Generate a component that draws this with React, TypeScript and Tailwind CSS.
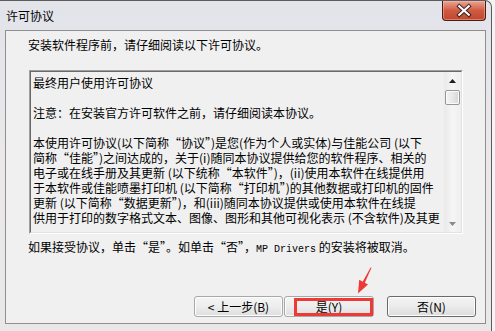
import React from 'react';

const agreementLines = [
  '最终用户使用许可协议',
  '',
  '注意：在安装官方许可软件之前，请仔细阅读本协议。',
  '',
  '本使用许可协议(以下简称“协议”)是您(作为个人或实体)与佳能公司 (以下',
  '简称“佳能”)之间达成的，关于(i)随同本协议提供给您的软件程序、相关的',
  '电子或在线手册及其更新 (以下统称“本软件”)，(ii)使用本软件在线提供用',
  '于本软件或佳能喷墨打印机 (以下简称“打印机”)的其他数据或打印机的固件',
  '更新 (以下简称“数据更新”)，和(iii)随同本协议提供或使用本软件在线提',
  '供用于打印的数字格式文本、图像、图形和其他可视化表示 (不含软件)及其更',
];

const CloseButton: React.FC = () => (
  <div className="w-[44px] h-[20px] rounded-b-[4px] border border-t-0 border-[#4a1c16] bg-gradient-to-b from-[#e9a594] via-[#cf5a42] to-[#c3452c] flex items-center justify-center shadow-[inset_0_0_0_1px_rgba(255,200,190,0.45)]">
    <svg width="44" height="20" viewBox="0 0 44 20">
      <path d="M17 5 L27 14 M27 5 L17 14" stroke="#3b2322" strokeWidth="4.2" strokeLinecap="square" />
      <path d="M17 5 L27 14 M27 5 L17 14" stroke="#ffffff" strokeWidth="2.2" strokeLinecap="square" />
    </svg>
  </div>
);

const ScrollBar: React.FC = () => (
  <div className="w-[17px] h-full flex flex-col bg-gradient-to-r from-[#e9e9e9] via-[#f5f5f5] to-[#efefef]">
    <div className="h-[17px] flex items-center justify-center">
      <svg width="7" height="4" viewBox="0 0 7 4">
        <polygon points="3.5,0 7,4 0,4" fill="#1e1e1e" />
      </svg>
    </div>
    <div className="mx-[1px] mt-[1px] h-[15px] rounded-[2px] border border-[#979797] bg-gradient-to-r from-[#f4f4f4] via-[#e8e8e8] to-[#d6d6d6] shadow-[inset_0_0_0_1px_#fbfbfb]" />
    <div className="flex-1" />
    <div className="h-[17px] flex items-center justify-center">
      <svg width="7" height="4" viewBox="0 0 7 4">
        <polygon points="0,0 7,0 3.5,4" fill="#8a8a8a" />
      </svg>
    </div>
  </div>
);

const WinButton: React.FC<{ label: string; width: string; isDefault?: boolean }> = ({ label, width, isDefault }) => (
  <div
    className={
      isDefault
        ? `${width} h-[21px] flex items-center justify-center rounded-[3px] border border-[#6a6a6a] bg-gradient-to-b from-[#f3f3f3] via-[#ebebeb] to-[#dcdcdc] shadow-[inset_0_0_0_1px_#fdfdfd] text-[12px] text-black`
        : `${width} h-[21px] flex items-center justify-center rounded-[3px] border border-[#a8a8a8] bg-gradient-to-b from-[#f4f4f4] via-[#ededed] to-[#dedede] shadow-[inset_0_0_0_1px_#fdfdfd] text-[12px] text-black`
    }
  >
    {label}
  </div>
);

export default function App() {
  return (
    <div
      className="relative w-[495px] h-[331px] overflow-hidden bg-[#f4f4f4]"
      style={{ fontFamily: '"Noto Sans CJK SC", "Noto Sans", sans-serif' }}
    >
      {/* 窗口外框 */}
      <div className="w-[492px] h-[331px] flex flex-col border-t border-r border-[#5c5c5c] rounded-tr-[7px] bg-gradient-to-b from-[#e2e4ea] via-[#ece8ea] to-[#e9e7e8]">
        {/* 标题栏 */}
        <div className="h-[29px] flex items-start">
          <div className="pl-[6px] pt-[7px] text-[12px] leading-[16px] text-black">许可协议</div>
          <div className="ml-auto mr-[5px]">
            <CloseButton />
          </div>
        </div>

        {/* 客户区 */}
        <div className="ml-[5px] w-[481px] h-[294px] border border-[#8f8f8f] bg-[#f0f0f0] flex flex-col">
          <div className="pl-[22px] pt-[6px] text-[12px] leading-[16px] text-black">
            安装软件程序前，请仔细阅读以下许可协议。
          </div>

          {/* 协议文本框 */}
          <div className="mt-[17px] ml-[23px] w-[434px] h-[164px] border border-t-[#a0a0a0] border-l-[#a0a0a0] border-r-white border-b-white">
            <div className="w-full h-full flex border border-t-[#696969] border-l-[#696969] border-r-[#e3e3e3] border-b-[#e3e3e3]">
              <div className="flex-1 overflow-hidden pl-[2px] pt-[3px] text-[12px] leading-[15px] text-black">
                {agreementLines.map((line, i) => (
                  <div key={i} className="h-[15px] whitespace-nowrap">
                    {line}
                  </div>
                ))}
              </div>
              <ScrollBar />
            </div>
          </div>

          <div className="mt-[5px] pl-[22px] text-[12px] leading-[16px] text-black whitespace-nowrap">
            如果接受协议，单击“是”。如单击“否”，
            <span className="text-[10px]" style={{ fontFamily: '"Liberation Mono", monospace' }}>
              MP Drivers
            </span>{' '}
            的安装将被取消。
          </div>

          {/* 按钮 */}
          <div className="mt-[38px] ml-[188px] flex">
            <WinButton label="< 上一步(B)" width="w-[89px]" />
            <div className="ml-[1px]">
              <WinButton label="是(Y)" width="w-[90px]" />
            </div>
            <div className="ml-[13px]">
              <WinButton label="否(N)" width="w-[89px]" isDefault />
            </div>
          </div>
        </div>
      </div>

      {/* 红色标注 */}
      <div className="absolute left-[294px] top-[298px] w-[79px] h-[18px] border-[3px] border-[#ee3a36]" />
      <svg className="absolute left-[340px] top-[262px]" width="40" height="40" viewBox="0 0 40 40">
        <polygon points="31.6,5.6 30.6,5.4 22.4,20.2 24.6,21.2" fill="#ee3a36" />
        <polygon points="18,31.5 28,22.6 19.2,17.8" fill="#ee3a36" />
      </svg>
    </div>
  );
}
